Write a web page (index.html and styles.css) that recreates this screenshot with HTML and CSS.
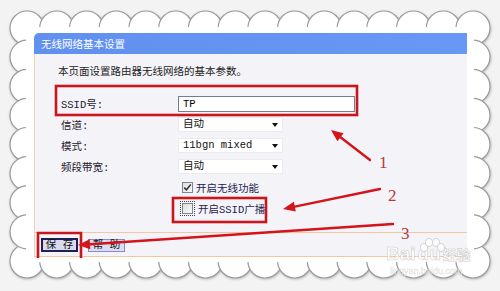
FILE: index.html
```html
<!DOCTYPE html>
<html lang="zh-CN">
  <head>
    <meta charset="UTF-8" />
    <meta name="viewport" content="width=device-width, initial-scale=1.0" />
    <title>无线网络基本设置</title>
    <link rel="stylesheet" href="styles.css">
  </head>
  <body>
    <div class="frame">
      <!-- scalloped paper edge -->
      <svg class="scallops" width="500" height="291" viewBox="0 0 500 291">
        <defs>
          <filter id="edge" x="-5%" y="-5%" width="110%" height="110%">
            <feDropShadow dx="0.6" dy="1" stdDeviation="0.8" flood-color="#777" flood-opacity="0.45" />
          </filter>
        </defs>
        <g fill="#fff" stroke="#9a9a9a" stroke-width="1.2" filter="url(#edge)">
          <circle cx="27" cy="28" r="17" /><circle cx="56.7" cy="28" r="17" /><circle cx="86.5" cy="28" r="17" />
          <circle cx="116.2" cy="28" r="17" /><circle cx="145.9" cy="28" r="17" /><circle cx="175.7" cy="28" r="17" />
          <circle cx="205.4" cy="28" r="17" /><circle cx="235.1" cy="28" r="17" /><circle cx="264.9" cy="28" r="17" />
          <circle cx="294.6" cy="28" r="17" /><circle cx="324.3" cy="28" r="17" /><circle cx="354.1" cy="28" r="17" />
          <circle cx="383.8" cy="28" r="17" /><circle cx="413.5" cy="28" r="17" /><circle cx="443.3" cy="28" r="17" />
          <circle cx="473" cy="28" r="17" />
          <circle cx="27" cy="261" r="17" /><circle cx="56.7" cy="261" r="17" /><circle cx="86.5" cy="261" r="17" />
          <circle cx="116.2" cy="261" r="17" /><circle cx="145.9" cy="261" r="17" /><circle cx="175.7" cy="261" r="17" />
          <circle cx="205.4" cy="261" r="17" /><circle cx="235.1" cy="261" r="17" /><circle cx="264.9" cy="261" r="17" />
          <circle cx="294.6" cy="261" r="17" /><circle cx="324.3" cy="261" r="17" /><circle cx="354.1" cy="261" r="17" />
          <circle cx="383.8" cy="261" r="17" /><circle cx="413.5" cy="261" r="17" /><circle cx="443.3" cy="261" r="17" />
          <circle cx="473" cy="261" r="17" />
          <circle cx="27" cy="57.1" r="17" /><circle cx="27" cy="86.3" r="17" /><circle cx="27" cy="115.4" r="17" />
          <circle cx="27" cy="144.5" r="17" /><circle cx="27" cy="173.6" r="17" /><circle cx="27" cy="202.8" r="17" />
          <circle cx="27" cy="231.9" r="17" />
          <circle cx="473" cy="57.1" r="17" /><circle cx="473" cy="86.3" r="17" /><circle cx="473" cy="115.4" r="17" />
          <circle cx="473" cy="144.5" r="17" /><circle cx="473" cy="173.6" r="17" /><circle cx="473" cy="202.8" r="17" />
          <circle cx="473" cy="231.9" r="17" />
        </g>
        <rect x="26" y="27" width="448" height="235" fill="#fff" />
      </svg>

      <div class="panel">
        <div class="panel-head">无线网络基本设置</div>
        <div class="panel-body">
          <p class="intro">本页面设置路由器无线网络的基本参数。</p>
          <div class="form">
            <span class="label">SSID号:</span>
            <div class="field"><span class="input">TP</span></div>
            <span class="label">信道:</span>
            <div class="field"><span class="select">自动</span></div>
            <span class="label">模式:</span>
            <div class="field"><span class="select">11bgn mixed</span></div>
            <span class="label">频段带宽:</span>
            <div class="field"><span class="select">自动</span></div>
            <span></span>
            <div class="field check">
              <span class="box">
                <svg width="9" height="9" viewBox="0 0 9 9"><path d="M1.2 4.6 L3.4 6.8 L7.8 1.6" fill="none" stroke="#333" stroke-width="1.5" /></svg>
              </span>
              开启无线功能
            </div>
            <span></span>
            <div class="field check">
              <span class="focus"><span class="box"></span></span>
              开启SSID广播
            </div>
          </div>
        </div>
        <div class="panel-foot">
          <button class="btn btn-save">保 存</button>
          <button class="btn">帮 助</button>
        </div>
      </div>

      <!-- red annotations -->
      <svg class="marks" width="500" height="291" viewBox="0 0 500 291">
        <g fill="none" stroke="#c9161d" stroke-width="2.6">
          <rect x="56" y="86" width="301" height="29" />
          <rect x="173" y="198" width="93" height="24" />
          <path d="M38 258 V233 H81 V258" />
        </g>
        <g stroke="#d3141b" stroke-width="2.4" stroke-linecap="round">
          <line x1="370" y1="160" x2="340.5" y2="137.3" />
          <line x1="380" y1="189" x2="294.8" y2="206.6" />
          <line x1="393" y1="224" x2="90" y2="244.2" />
        </g>
        <g fill="#d3141b">
          <polygon points="331,130 343.6,133.3 337.4,141.3" />
          <polygon points="283,209 293.8,201.7 295.8,211.5" />
          <polygon points="78,245 89.7,239.2 90.3,249.2" />
        </g>
        <g class="num" fill="#b4383c">
          <text x="379" y="168">1</text>
          <text x="388" y="201">2</text>
          <text x="401" y="239">3</text>
        </g>
      </svg>

      <div class="watermark">
        <div class="wm-logo">
          <span class="wm-bai">Bai</span><span class="wm-du">du</span><span class="wm-cn">经验</span>
          <span class="paw"><i></i><i></i><i></i><i></i></span>
        </div>
        <div class="wm-url">jingyan.baidu.com</div>
      </div>
    </div>
  </body>
</html>
```

FILE: styles.css
```css
body {
  margin: 0;
  padding: 0;
  background-color: #f3f3f4;
  font-family: "Liberation Mono", "Noto Sans CJK SC", monospace;
  font-size: 10.5px;
  color: #222;
}
.frame {
  position: relative;
  width: 500px;
  height: 291px;
  overflow: hidden;
}
.scallops {
  position: absolute;
  left: 0;
  top: 0;
}
.panel {
  position: relative;
  margin-left: 34px;
  padding-top: 33px;
  width: 433px;
}
.panel-head {
  height: 21px;
  line-height: 21px;
  padding-left: 7px;
  background: linear-gradient(90deg, #6190ee, #6798f6);
  border-radius: 5px 0 0 0;
  color: #fff;
  font-family: "Noto Sans CJK SC", sans-serif;
}
.panel-body {
  height: 178px;
  box-sizing: border-box;
  padding-top: 11px;
  background-color: #f4f3f7;
  border-left: 1px solid #f3d2b0;
}
.intro {
  margin: 0 0 14px 23px;
  height: 14px;
  line-height: 14px;
  color: #1e1e1e;
}
.form {
  display: grid;
  grid-template-columns: 117px 1fr;
  grid-auto-rows: 21px;
  align-items: center;
  padding-left: 26px;
}
.label {
  color: #1f2030;
}
.field {
  display: flex;
  align-items: center;
}
.input {
  box-sizing: border-box;
  width: 177px;
  height: 16px;
  line-height: 14px;
  padding-left: 4px;
  border: 1px solid #6f7f95;
  background-color: #fff;
  color: #000;
}
.select {
  position: relative;
  box-sizing: border-box;
  width: 105px;
  height: 15px;
  line-height: 13px;
  padding-left: 4px;
  border: 1px solid #ebebef;
  background-color: #fff;
  color: #111;
}
.select::after {
  content: "";
  position: absolute;
  right: 4px;
  top: 5px;
  border-top: 4px solid #111;
  border-left: 3.5px solid transparent;
  border-right: 3.5px solid transparent;
}
.check {
  padding-left: 4px;
  gap: 3px;
  color: #1b2452;
}
.box {
  box-sizing: border-box;
  width: 11px;
  height: 11px;
  border: 1px solid #7b8798;
  background: linear-gradient(135deg, #dcdcdc, #fbfbfb);
  display: flex;
  align-items: center;
  justify-content: center;
}
.focus {
  margin-left: -2px;
  padding: 1px;
  border: 1px dotted #444;
  display: flex;
}
.panel-foot {
  display: flex;
  align-items: flex-start;
  padding: 5px 0 0 6px;
  box-sizing: border-box;
  height: 25px;
  background-color: #f4f3f7;
  border-top: 1px solid #f3c79f;
  border-bottom: 1px solid #f3c79f;
  border-left: 1px solid #f3d2b0;
}
.btn {
  box-sizing: border-box;
  width: 37px;
  height: 13px;
  margin: 1px 0 0 10px;
  padding: 0;
  line-height: 11px;
  border: 1px solid #8a8ac8;
  background-color: #dcdcf3;
  color: #111;
  font-family: "Liberation Mono", "Noto Sans CJK SC", monospace;
  font-size: 10.5px;
}
.btn-save {
  height: 14px;
  margin: 0;
  border: 2px solid #1c2352;
  background-color: #d9d9ef;
  line-height: 10px;
}
.marks {
  position: absolute;
  left: 0;
  top: 0;
}
.num {
  font-family: "Liberation Serif", serif;
  font-size: 17px;
}
.watermark {
  position: absolute;
  left: 386px;
  top: 244px;
  width: 90px;
  color: #fff;
  opacity: 0.85;
}
.wm-logo {
  position: relative;
  display: flex;
  align-items: baseline;
  height: 22px;
  font-family: "Liberation Sans", sans-serif;
  font-weight: bold;
  line-height: 20px;
  -webkit-text-stroke: 0.6px #c8c8c8;
}
.wm-bai {
  font-size: 19px;
}
.wm-du {
  font-size: 19px;
  margin-left: 2px;
}
.wm-cn {
  font-family: "Noto Sans CJK SC", sans-serif;
  font-size: 14px;
  margin-left: 2px;
}
.paw {
  position: absolute;
  left: 34px;
  top: -6px;
  width: 22px;
  height: 12px;
}
.paw i {
  position: absolute;
  width: 6px;
  height: 7px;
  border-radius: 50%;
  background-color: #fff;
  border: 1px solid #cfcfcf;
}
.paw i:nth-child(1) { left: 0; top: 5px; }
.paw i:nth-child(2) { left: 5px; top: 0; }
.paw i:nth-child(3) { left: 12px; top: 0; }
.paw i:nth-child(4) { left: 17px; top: 5px; }
.wm-url {
  font-family: "Liberation Sans", sans-serif;
  font-size: 9px;
  line-height: 10px;
  color: #eee;
  -webkit-text-stroke: 0.3px #d6d6d6;
  padding-left: 4px;
}
```
